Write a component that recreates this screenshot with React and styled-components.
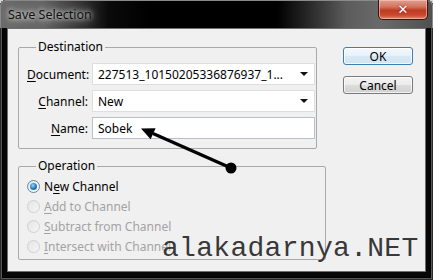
import React from "react";
import styled, { createGlobalStyle } from "styled-components";

const GlobalStyle = createGlobalStyle`
  html, body {
    margin: 0;
    padding: 0;
    background: #d8d8d8;
  }
  body {
    font-family: "Noto Sans", "DejaVu Sans", sans-serif;
  }
`;

const Window = styled.div`
  position: relative;
  width: 433px;
  height: 280px;
  box-sizing: border-box;
  padding: 0 7px 8px 7px;
  display: flex;
  flex-direction: column;
  background: #070707;
  border-radius: 6px 6px 0 0;
  overflow: hidden;
  box-shadow: inset 0 0 0 1px #2a2a2a, inset 0 0 0 2px #5a5a5a,
    inset 0 0 0 3px #000;
`;

const TitleBar = styled.div`
  height: 28px;
  margin: 0 -7px;
  display: flex;
  align-items: flex-start;
  background: linear-gradient(
    90deg,
    #6a6a6a 0%,
    #666 10%,
    #3a3a3a 18%,
    #0a0a0a 25%,
    #000 35%,
    #000 64%,
    #2c2c2c 72%,
    #5c5c5c 80%,
    #6a6a6a 88%,
    #505050 100%
  );
  border-radius: 6px 6px 0 0;
  box-shadow: inset 0 1px 0 #8a8a8a, inset 1px 0 0 #8a8a8a, inset -1px 0 0 #8a8a8a;
`;

const Title = styled.div`
  padding: 7px 0 0 8px;
  font-size: 12.5px;
  line-height: 16px;
  color: #111;
  text-shadow: 0 0 4px rgba(235, 235, 235, 0.95), 0 0 8px rgba(220, 220, 220, 0.8),
    0 0 12px rgba(200, 200, 200, 0.6);
`;

const CloseButton = styled.div`
  margin-left: auto;
  margin-right: 5px;
  width: 50px;
  height: 20px;
  box-sizing: border-box;
  display: flex;
  align-items: center;
  justify-content: center;
  border: 1px solid #3a1410;
  border-top: none;
  border-radius: 0 0 5px 5px;
  background: linear-gradient(
    180deg,
    #e0a090 0%,
    #d37560 35%,
    #c03a22 55%,
    #c84a30 80%,
    #e08868 100%
  );
  box-shadow: inset 0 0 0 1px rgba(255, 210, 200, 0.55);
  color: #fff;
  font-family: "DejaVu Sans", sans-serif;
  font-weight: bold;
  font-size: 13px;
  line-height: 1;
  text-shadow: 0 0 2px #6a1a10;
`;

const Client = styled.div`
  flex: 1;
  display: flex;
  padding: 10px 12px 0 10px;
  gap: 17px;
  background: #f0f0f0;
  border: 1px solid #6e6e6e;
`;

const LeftColumn = styled.div`
  display: flex;
  flex-direction: column;
  gap: 9px;
`;

const Group = styled.fieldset`
  margin: 0;
  width: ${(p) => p.$width}px;
  box-sizing: border-box;
  padding: ${(p) => p.$padding};
  border: 1px solid #a9a9a9;
  border-radius: 2px;
  min-inline-size: 0;
`;

const Legend = styled.legend`
  margin-left: 9px;
  padding: 0 2px;
  font-size: 12px;
  line-height: 16px;
  color: #000;
`;

const FieldGrid = styled.div`
  display: grid;
  grid-template-columns: 61px 1fr;
  column-gap: 4px;
  row-gap: 5px;
  align-items: center;
`;

const Label = styled.div`
  text-align: right;
  font-size: 12px;
  color: #000;
  white-space: nowrap;
`;

const Key = styled.span`
  text-decoration: underline;
  text-underline-offset: 2px;
`;

const Select = styled.div`
  height: 22px;
  box-sizing: border-box;
  display: flex;
  align-items: center;
  padding: 0 6px 0 5px;
  background: #fff;
  border: 1px solid #dedede;
  font-size: 12px;
  color: #000;
`;

const SelectText = styled.span`
  flex: 1;
  white-space: nowrap;
  overflow: hidden;
`;

const Caret = styled.span`
  width: 0;
  height: 0;
  border-left: 4px solid transparent;
  border-right: 4px solid transparent;
  border-top: 4px solid #111;
`;

const TextInput = styled.input`
  height: 22px;
  box-sizing: border-box;
  margin: 0;
  padding: 0 5px;
  width: 100%;
  background: #fff;
  border: 1px solid #b7c0ca;
  font-family: "Noto Sans", "DejaVu Sans", sans-serif;
  font-size: 12px;
  color: #000;
  outline: none;
`;

const RadioRow = styled.div`
  height: 20px;
  display: flex;
  align-items: center;
  gap: 4px;
  font-size: 12px;
  color: ${(p) => (p.$disabled ? "#a3a3a3" : "#000")};
`;

const RadioDot = styled.span`
  width: 13px;
  height: 13px;
  box-sizing: border-box;
  border-radius: 50%;
  display: flex;
  align-items: center;
  justify-content: center;
  border: 1px solid ${(p) => (p.$disabled ? "#d0d0d0" : "#6f8398")};
  background: ${(p) =>
    p.$disabled
      ? "linear-gradient(135deg, #e4e4e4, #f6f6f6)"
      : "linear-gradient(135deg, #dfe6ec, #ffffff)"};

  &::after {
    content: "";
    display: ${(p) => (p.$checked ? "block" : "none")};
    width: 7px;
    height: 7px;
    border-radius: 50%;
    background: radial-gradient(circle at 40% 35%, #9bd6f8 0%, #2d89c8 45%, #0d4d7e 100%);
  }
`;

const ButtonColumn = styled.div`
  display: flex;
  flex-direction: column;
  gap: 11px;
  padding-top: 8px;
`;

const Button = styled.div`
  width: 70px;
  height: 18px;
  box-sizing: border-box;
  display: flex;
  align-items: center;
  justify-content: center;
  border-radius: 3px;
  font-size: 12px;
  color: #000;
  border: 1px solid ${(p) => (p.$default ? "#3c7fb1" : "#7a7a7a")};
  background: ${(p) =>
    p.$default
      ? "linear-gradient(180deg, #f3f9fd 0%, #e6f1f9 50%, #d8e9f5 51%, #cfe3f2 100%)"
      : "linear-gradient(180deg, #f4f4f4 0%, #ebebeb 50%, #dddddd 51%, #d0d0d0 100%)"};
  box-shadow: inset 0 0 0 1px rgba(255, 255, 255, 0.7);
`;

const Overlay = styled.svg`
  position: absolute;
  left: 0;
  top: 0;
  pointer-events: none;
`;

const Watermark = styled.div`
  position: absolute;
  left: 162px;
  top: 235px;
  font-family: "Liberation Mono", "DejaVu Sans Mono", monospace;
  font-size: 28px;
  line-height: 28px;
  letter-spacing: 0.3px;
  color: #383838;
  white-space: nowrap;
  pointer-events: none;
`;

const radios = [
  { pre: "N", key: "e", post: "w Channel", checked: true },
  { pre: "", key: "A", post: "dd to Channel", disabled: true },
  { pre: "", key: "S", post: "ubtract from Channel", disabled: true },
  { pre: "", key: "I", post: "ntersect with Channel", disabled: true },
];

export default function App() {
  return (
    <>
      <GlobalStyle />
      <Window>
        <TitleBar>
          <Title>Save Selection</Title>
          <CloseButton>✕</CloseButton>
        </TitleBar>
        <Client>
          <LeftColumn>
            <Group $width={299} $padding="8px 1px 9px 8px">
              <Legend>Destination</Legend>
              <FieldGrid>
                <Label>
                  <Key>D</Key>ocument:
                </Label>
                <Select>
                  <SelectText>227513_10150205336876937_1...</SelectText>
                  <Caret />
                </Select>
                <Label>
                  <Key>C</Key>hannel:
                </Label>
                <Select>
                  <SelectText>New</SelectText>
                  <Caret />
                </Select>
                <Label>
                  <Key>N</Key>ame:
                </Label>
                <TextInput defaultValue="Sobek" readOnly />
              </FieldGrid>
            </Group>
            <Group $width={308} $padding="2px 1px 3px 8px">
              <Legend>Operation</Legend>
              {radios.map((r, i) => (
                <RadioRow key={i} $disabled={r.disabled}>
                  <RadioDot $checked={r.checked} $disabled={r.disabled} />
                  <span>
                    {r.pre}
                    <Key>{r.key}</Key>
                    {r.post}
                  </span>
                </RadioRow>
              ))}
            </Group>
          </LeftColumn>
          <ButtonColumn>
            <Button $default>OK</Button>
            <Button>Cancel</Button>
          </ButtonColumn>
        </Client>
        <Overlay width="433" height="280" viewBox="0 0 433 280">
          <line x1="231" y1="168" x2="153" y2="133.5" stroke="#000" strokeWidth="3.2" />
          <polygon points="141,128.5 155.6,128.2 150.6,139.2" fill="#000" />
          <circle cx="231" cy="168" r="5.5" fill="#000" />
        </Overlay>
        <Watermark>alakadarnya.NET</Watermark>
      </Window>
    </>
  );
}
